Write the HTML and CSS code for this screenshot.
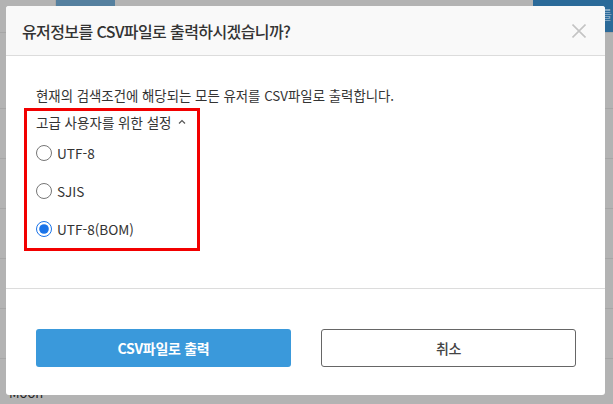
FILE: index.html
```html
<!DOCTYPE html>
<html lang="ko">
<head>
<meta charset="utf-8">
<title>CSV 출력</title>
<link rel="stylesheet" href="styles.css">
</head>
<body>
<div class="page">
  <div class="topbar">
    <span class="cell-left"></span>
    <span class="tab-blue"></span>
    <span class="spacer"></span>
    <span class="btn-blue">를</span>
  </div>
  <div class="row"></div>
  <div class="row"></div>
  <div class="row"></div>
  <div class="row"></div>
  <div class="row"></div>
  <div class="row"></div>
  <div class="row last"><span class="peek">Moon</span></div>
</div>

<div class="overlay">
  <div class="modal">
    <div class="modal-header">
      <h1 class="modal-title">유저정보를 CSV파일로 출력하시겠습니까?</h1>
      <button class="close" type="button" aria-label="닫기">
        <svg width="14" height="14" viewBox="0 0 14 14"><path d="M0.5 0.5 L13.5 13.5 M13.5 0.5 L0.5 13.5" stroke="#c4c4c4" stroke-width="1.6" fill="none"/></svg>
      </button>
    </div>
    <div class="modal-body">
      <p class="desc">현재의 검색조건에 해당되는 모든 유저를 CSV파일로 출력합니다.</p>
      <div class="advanced">
        <div class="adv-title">고급 사용자를 위한 설정
          <svg class="caret" width="8" height="6" viewBox="0 0 8 6"><path d="M1 4.5 L4 1.5 L7 4.5" stroke="#555" stroke-width="1.2" fill="none"/></svg>
        </div>
        <label class="opt"><input type="radio" name="enc"> <span>UTF-8</span></label>
        <label class="opt"><input type="radio" name="enc"> <span>SJIS</span></label>
        <label class="opt"><input type="radio" name="enc" checked> <span>UTF-8(BOM)</span></label>
      </div>
    </div>
    <div class="modal-footer">
      <button class="btn btn-primary" type="button">CSV파일로 출력</button>
      <button class="btn btn-default" type="button">취소</button>
    </div>
  </div>
</div>
</body>
</html>
```

FILE: styles.css
```css
* { box-sizing: border-box; }
html, body { margin: 0; padding: 0; }
body {
  width: 613px;
  height: 404px;
  overflow: hidden;
  background: #b3b3b3;
  font-family: "Noto Sans CJK KR", "Noto Sans", sans-serif;
  color: #333;
  position: relative;
}

.page { width: 613px; height: 404px; overflow: hidden; }
.topbar {
  display: flex;
  height: 33px;
  border-bottom: 1px solid #a6a6a6;
}
.cell-left { width: 56px; border-right: 1px solid #a8a8a8; }
.tab-blue { width: 59px; height: 6px; background: #55809f; }
.spacer { flex: 1; }
.btn-blue {
  width: 80px;
  background: #2b6a99;
  color: #8fb1cc;
  font-size: 13px;
  line-height: 28px;
  display: flex;
  justify-content: flex-end;
  padding-right: 1px;
}
.row { height: 50px; border-bottom: 1px solid #a6a6a6; }
.row:nth-child(2) { height: 76px; }
.row.last { height: 44px; border-bottom: 0; position: relative; }
.peek {
  position: absolute;
  left: 9px;
  top: 25px;
  font-size: 13px;
  line-height: 18px;
  color: #222;
}

.overlay {
  position: absolute;
  inset: 0;
}
.modal {
  position: absolute;
  left: 6px;
  top: 6px;
  width: 599px;
  height: 389px;
  background: #fff;
  border-radius: 3px;
  display: flex;
  flex-direction: column;
  overflow: hidden;
}
.modal-header {
  height: 50px;
  background: #f9f9f9;
  border-bottom: 1px solid #dcdcdc;
  display: flex;
  align-items: center;
  justify-content: space-between;
  padding: 0 19px 0 16px;
}
.modal-title {
  margin: 0;
  font-size: 16px;
  font-weight: 500;
  letter-spacing: -0.6px;
  color: #333;
}
.close {
  border: 0;
  background: none;
  padding: 0;
  width: 14px;
  height: 14px;
  display: block;
  margin-top: 1px;
}
.close svg { display: block; }

.modal-body {
  height: 233px;
  border-bottom: 1px solid #dcdcdc;
  padding: 29px 0 0 18px;
}
.desc {
  margin: 0 0 3px 12px;
  font-size: 13.4px;
  line-height: 20px;
  color: #333;
}
.advanced {
  width: 176px;
  height: 143px;
  border: 3px solid #f20000;
  padding: 1px 0 0 9px;
  display: flex;
  flex-direction: column;
}
.adv-title {
  font-size: 13.5px;
  line-height: 20px;
  color: #333;
  margin-bottom: 2px;
  display: flex;
  align-items: center;
}
.caret { margin-left: 6px; margin-top: -1px; }
.opt {
  height: 38px;
  display: flex;
  align-items: center;
  font-size: 13.6px;
  font-weight: 400;
  color: #333;
}
.opt input {
  width: 16px;
  height: 16px;
  margin: 0 5px 0 0;
  accent-color: #1a73e8;
}

.modal-footer {
  flex: 1;
  display: flex;
  gap: 30px;
  padding: 40px 0 0 30px;
}
.btn {
  width: 255px;
  height: 38px;
  border-radius: 3px;
  font-family: "Noto Sans CJK KR", "Noto Sans", sans-serif;
  font-size: 14px;
  letter-spacing: -0.3px;
}
.btn-primary {
  background: #3a99db;
  border: 0;
  color: #fff;
  font-weight: 700;
}
.btn-default {
  background: #fff;
  border: 1px solid #666;
  color: #444;
  font-weight: 500;
}
```
